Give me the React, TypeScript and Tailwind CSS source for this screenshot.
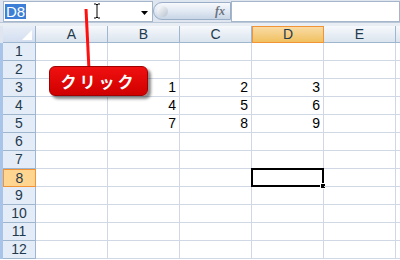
import React from "react";

const cols = ["A", "B", "C", "D", "E"];
const rows = Array.from({ length: 12 }, (_, i) => i + 1);

const data: Record<string, string> = {
  B3: "1", C3: "2", D3: "3",
  B4: "4", C4: "5", D4: "6",
  B5: "7", C5: "8", D5: "9",
};

const font = { fontFamily: '"Liberation Sans", "DejaVu Sans", sans-serif' };

function FormulaBar() {
  return (
    <div className="flex h-[22px] bg-[#dfe6ef]">
      {/* name box */}
      <div className="relative ml-[3px] mt-[1px] flex h-[21px] w-[150px] items-center border border-[#a5b6cb] bg-white">
        <span className="ml-[1px] bg-[#3d7fd6] px-[1px] text-[15px] leading-[15px] text-white">D8</span>
        <svg className="absolute right-[4px] top-[9px]" width="7" height="4" viewBox="0 0 7 4">
          <path d="M0 0h7L3.5 4z" fill="#000" />
        </svg>
      </div>
      {/* fx pill */}
      <div className="relative mt-[2px] flex h-[18px] w-[78px] items-center justify-end rounded-l-full border border-[#9aaec8] bg-gradient-to-b from-[#f7f9fc] via-[#e2e9f3] to-[#c8d5e6] pr-[5px]">
        <span className="absolute left-[3px] top-[3px] h-[11px] w-[11px] rounded-full bg-gradient-to-br from-[#ffffff] to-[#b7c2cf]" />
        <span className="text-[12px] font-bold italic text-[#6b7380]" style={{ fontFamily: '"Liberation Serif", serif' }}>fx</span>
      </div>
      <div className="mt-[1px] h-[21px] flex-1 border border-[#a5b6cb] bg-white" />
    </div>
  );
}

export default function App() {
  return (
    <div className="relative h-[260px] w-[400px] overflow-hidden bg-white" style={font}>
      <FormulaBar />
      <div className="h-[4px] border-t border-[#b9c7d8] bg-[#e9eef5]" />

      {/* column header */}
      <div className="flex h-[17px]">
        <div className="w-[3px] bg-[#dfe6ef]" />
        <div className="relative w-[33px] border-r border-b border-[#9eb6ce] bg-gradient-to-b from-[#e8eef7] to-[#d3def0]">
          <svg className="absolute bottom-[2px] right-[3px]" width="10" height="10" viewBox="0 0 10 10">
            <path d="M10 0v10H0z" fill="#ffffff" />
          </svg>
        </div>
        {cols.map((c) =>
          c === "D" ? (
            <div key={c} className="flex w-[72px] items-center justify-center border border-[#f29436] bg-gradient-to-b from-[#f9dba4] to-[#f1c15f] text-[14px] text-[#1f3a4d]">
              {c}
            </div>
          ) : (
            <div key={c} className="flex w-[72px] items-center justify-center border-r border-b border-[#9eb6ce] bg-gradient-to-b from-[#f6f9fc] to-[#dbe4ee] text-[14px] text-[#1f3a4d]">
              {c}
            </div>
          )
        )}
        <div className="flex-1 border-b border-[#9eb6ce] bg-gradient-to-b from-[#f6f9fc] to-[#dbe4ee]" />
      </div>

      {rows.map((r) => (
        <div key={r} className={`relative flex h-[18px] ${r === 8 ? "z-10" : ""}`}>
          <div className="w-[3px] bg-[#a9c4e9]" />
          {r === 8 ? (
            <div className="flex w-[33px] items-center justify-center border border-[#f29436] bg-[#ffd590] text-[14px] text-[#1f3a4d]">
              {r}
            </div>
          ) : (
            <div className="flex w-[33px] items-center justify-center border-r border-b border-[#9eb6ce] bg-[#e4ecf7] text-[14px] text-[#1f3a4d]">
              {r}
            </div>
          )}
          {cols.map((c) => (
            <div key={c} className="relative flex w-[72px] items-center justify-end border-r border-b border-[#d0d7e5] pr-[3px] text-[14px] text-black">
              {data[c + r]}
              {c === "D" && r === 8 && (
                <>
                  <span className="absolute -left-[1px] -top-[1px] h-[19px] w-[73px] border-2 border-black" />
                  <span className="absolute -bottom-[3px] -right-[3px] h-[6px] w-[6px] border border-white bg-black" />
                </>
              )}
            </div>
          ))}
          <div className="flex-1 border-b border-[#d0d7e5]" />
        </div>
      ))}

      {/* red pointer line + I-beam cursor */}
      <svg className="absolute left-0 top-0 z-20" width="400" height="260" viewBox="0 0 400 260">
        <path d="M86 9 L89 70" stroke="#ff1010" strokeWidth="3" fill="none" />
        <path d="M94 4h2l1 1 1-1h2M97 5v12M94 18h2l1-1 1 1h2" stroke="#000" strokeWidth="1" fill="none" />
      </svg>

      {/* click label */}
      <div className="absolute left-[49px] top-[66px] z-20 flex h-[30px] w-[99px] items-center justify-center rounded-[6px] border border-[#a00000] bg-gradient-to-b from-[#f01010] to-[#d00000] shadow-[3px_3px_3px_rgba(0,0,0,0.45)]">
        <span className="text-[16px] font-bold tracking-[3px] text-white" style={{ fontFamily: '"Noto Sans CJK JP", sans-serif' }}>
          クリック
        </span>
      </div>
    </div>
  );
}
